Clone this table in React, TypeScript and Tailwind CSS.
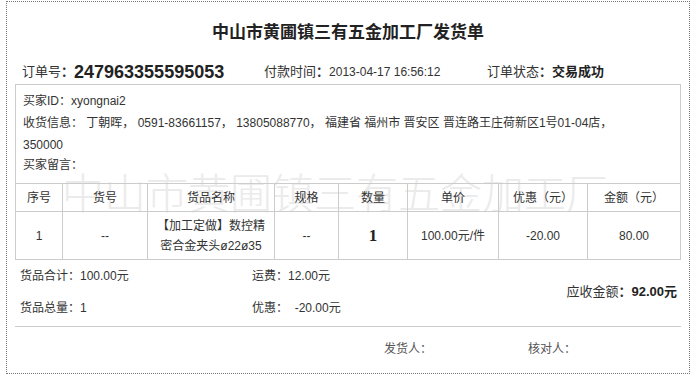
import React from "react";

const font = { fontFamily: '"Liberation Sans", "Noto Sans CJK SC", sans-serif' };

export default function App() {
  const cols = [47, 85, 127, 64, 69, 91, 89, 93];
  const headers = ["序号", "货号", "货品名称", "规格", "数量", "单价", "优惠（元）", "金额（元）"];
  return (
    <div className="bg-white w-[691px] h-[375px] overflow-hidden text-[12px] text-[#333]" style={font}>
      <div className="ml-[6px] mt-[1px] w-[684px] h-[373px] border border-dotted border-[#777] px-[8px]">
        <div className="pt-[19px] h-[43px] text-center text-[17px] leading-[24px] font-bold text-[#222]">
          中山市黄圃镇三有五金加工厂发货单
        </div>
        <div className="mt-[15px] h-[24px] flex items-center pl-[7px] text-[13px] leading-[24px]">
          <div className="w-[242px] flex items-center">
            <span>订单号<b>：</b></span>
            <span className="text-[18px] font-bold text-[#222]">247963355595053</span>
          </div>
          <div className="w-[223px]">
            付款时间<b>：</b>
            <span className="text-[12px]">2013-04-17 16:56:12</span>
          </div>
          <div>
            订单状态<b>：</b>
            <span className="font-bold text-[#222]">交易成功</span>
          </div>
        </div>
        <div className="relative">
          <div className="border border-b-0 border-[#ccc] pl-[7px] pr-[10px] pt-[5px] pb-[9px] leading-[22px]">
            <div>买家ID：xyongnai2</div>
            <div>
              收货信息： 丁朝晖， 0591-83661157， 13805088770， 福建省 福州市 晋安区 晋连路王庄荷新区1号01-04店，
              <br />
              350000
            </div>
            <div className="leading-[18px]">买家留言：</div>
          </div>
          <div
            className="absolute left-[47px] top-[86px] text-[42px] leading-[42px] text-[#ebebeb] whitespace-nowrap pointer-events-none"
            style={{ fontFamily: '"Noto Sans CJK SC", sans-serif', fontWeight: 300 }}
          >
            中山市黄圃镇三有五金加工厂
          </div>
          <table className="relative w-[666px] table-fixed border-collapse text-center">
            <colgroup>
              {cols.map((w, i) => (
                <col key={i} style={{ width: w }} />
              ))}
            </colgroup>
            <tbody>
              <tr className="h-[28px]">
                {headers.map((h) => (
                  <td key={h} className="border border-[#ccc] p-0">
                    {h}
                  </td>
                ))}
              </tr>
              <tr className="h-[48px] leading-[20px]">
                <td className="border border-[#ccc] p-0">1</td>
                <td className="border border-[#ccc] p-0">--</td>
                <td className="border border-[#ccc] p-0">
                  【加工定做】数控精
                  <br />
                  密合金夹头ø22ø35
                </td>
                <td className="border border-[#ccc] p-0">--</td>
                <td
                  className="border border-[#ccc] p-0 text-[17px] font-bold text-[#222]"
                  style={{ fontFamily: '"Liberation Serif", serif' }}
                >
                  1
                </td>
                <td className="border border-[#ccc] p-0">100.00元/件</td>
                <td className="border border-[#ccc] p-0">-20.00</td>
                <td className="border border-[#ccc] p-0">80.00</td>
              </tr>
            </tbody>
          </table>
        </div>
        <div className="flex pt-[6px] leading-[20px]">
          <div className="w-[237px] pl-[5px] flex flex-col gap-[12px]">
            <div>货品合计：100.00元</div>
            <div>货品总量：1</div>
          </div>
          <div className="w-[200px] flex flex-col gap-[12px]">
            <div>运费：12.00元</div>
            <div>优惠：&nbsp;&nbsp;-20.00元</div>
          </div>
          <div className="flex-1 flex items-center justify-end pr-[4px] text-[13px]">
            应收金额<b>：</b>
            <span className="font-bold text-[#222]">92.00元</span>
          </div>
        </div>
        <div className="mt-[8px] border-t border-[#ccc] w-[666px]" />
        <div className="flex pt-[12px] leading-[20px] text-[#555]">
          <div className="w-[369px]" />
          <div className="w-[144px]">发货人：</div>
          <div>核对人：</div>
        </div>
      </div>
    </div>
  );
}
